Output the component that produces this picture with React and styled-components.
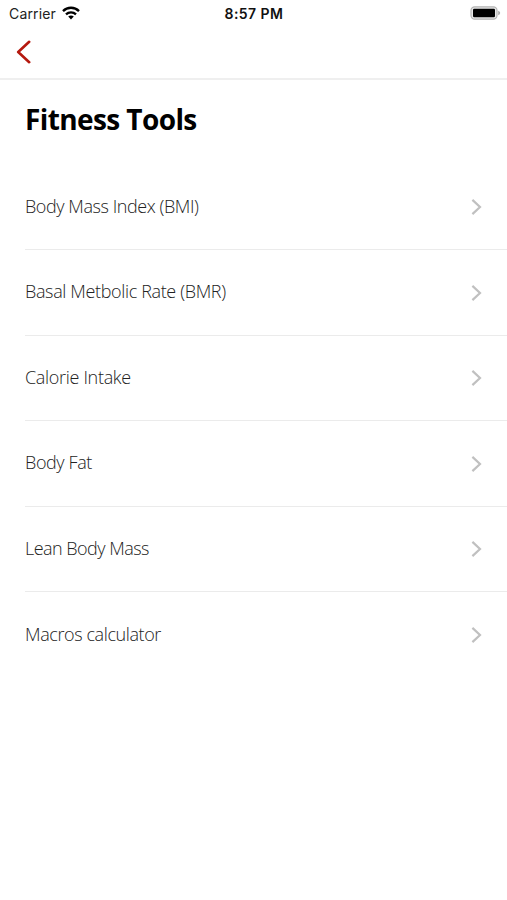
import styled, { createGlobalStyle } from "styled-components";

const GlobalStyle = createGlobalStyle`
  * {
    box-sizing: border-box;
  }
  body {
    margin: 0;
    background: #fff;
  }
`

const Screen = styled.div`
  display: flex;
  flex-direction: column;
  width: 507px;
  height: 900px;
  overflow: hidden;
  background: #fff;
`

const StatusBar = styled.div`
  display: grid;
  grid-template-columns: 1fr auto 1fr;
  align-items: center;
  height: 27px;
  padding: 0 6px 0 9px;
  font-family: Inter, "Liberation Sans", sans-serif;
  font-size: 14px;
  line-height: 27px;
  color: #222;
`

const Carrier = styled.div`
  display: flex;
  align-items: center;
  gap: 6px;
  letter-spacing: 0.15px;
`

const WifiIcon = styled.svg`
  margin-bottom: 1px;
`

const Time = styled.span`
  margin-right: 2px;
  font-weight: 600;
  letter-spacing: 0.45px;
  color: #111;
`

const Battery = styled.svg`
  justify-self: end;
  margin-bottom: 1px;
`

const NavBar = styled.header`
  display: flex;
  align-items: center;
  height: 53px;
  padding: 0 16px 2px;
  border-bottom: 2px solid #efefef;
`

const BackButton = styled.button`
  display: flex;
  padding: 0;
  border: 0;
  background: none;
`

const Title = styled.h1`
  margin: 0;
  padding: 19px 25px 0;
  height: 84.5px;
  font-family: "Open Sans", "Noto Sans", sans-serif;
  font-size: 28px;
  font-weight: 700;
  letter-spacing: -0.6px;
  line-height: 40px;
  color: #000;
`

const List = styled.ul`
  margin: 0;
  padding: 0 0 0 25px;
  list-style: none;
`

const Row = styled.li`
  display: flex;
  align-items: center;
  justify-content: space-between;
  height: 85.5px;
  padding: 1px 25px 0 0;
  border-bottom: 1px solid #ebebeb;
  &:last-child {
    border-bottom: 0;
  }
`

const Label = styled.span`
  padding-bottom: 3px;
  font-family: "Open Sans", "Noto Sans", sans-serif;
  font-size: 18px;
  font-weight: 300;
  letter-spacing: ${(p) => p.$spacing || "-0.4px"};
  line-height: 26px;
  white-space: nowrap;
  color: #222;
`

const tools = [
  { name: "Body Mass Index (BMI)", spacing: "-0.43px" },
  { name: "Basal Metbolic Rate (BMR)", spacing: "-0.36px" },
  { name: "Calorie Intake", spacing: "-0.32px" },
  { name: "Body Fat" },
  { name: "Lean Body Mass", spacing: "-0.53px" },
  { name: "Macros calculator" },
]

const App = () => {
  return (
    <Screen>
      <GlobalStyle />
      <StatusBar>
        <Carrier>
          Carrier
          <WifiIcon width="18" height="14" viewBox="0 0 18 14" fill="none" stroke="#000" strokeWidth="2.3">
            <path d="M1 5.1C5.4 .6 12.6 .6 17 5.1" />
            <path d="M4 8.3C6.8 5.6 11.2 5.6 14 8.3" />
            <path d="M9 13.5L6.2 10.6C7.8 9.1 10.2 9.1 11.8 10.6Z" fill="#000" stroke="none" />
          </WifiIcon>
        </Carrier>
        <Time>8:57 PM</Time>
        <Battery width="31" height="14" viewBox="0 0 31 14">
          <rect x="1" y=".8" width="26" height="12.4" rx="3.6" fill="#e8e8e8" stroke="#b4b4b4" strokeWidth="1.2" />
          <rect x="3" y="2.7" width="22" height="8.6" rx="1.2" fill="#000" />
          <path d="M28.2 4.8C30.8 5.6 30.8 8.4 28.2 9.2Z" fill="#aaa" />
        </Battery>
      </StatusBar>
      <NavBar>
        <BackButton aria-label="Back">
          <svg width="16" height="24" viewBox="0 0 16 24" fill="none">
            <path d="M13.2 1.8L2.2 12L13.2 22.2" stroke="#b5190f" strokeWidth="2.6" strokeLinecap="round" strokeLinejoin="round" />
          </svg>
        </BackButton>
      </NavBar>
      <Title>Fitness Tools</Title>
      <List>
        {tools.map((tool) => (
          <Row key={tool.name}>
            <Label $spacing={tool.spacing}>{tool.name}</Label>
            <svg width="11" height="16" viewBox="0 0 11 16" fill="none">
              <path d="M2.2 1.6L9 8L2.2 14.4" stroke="#c0c0c0" strokeWidth="2.2" strokeLinecap="square" />
            </svg>
          </Row>
        ))}
      </List>
    </Screen>
  )
}

export default App;
